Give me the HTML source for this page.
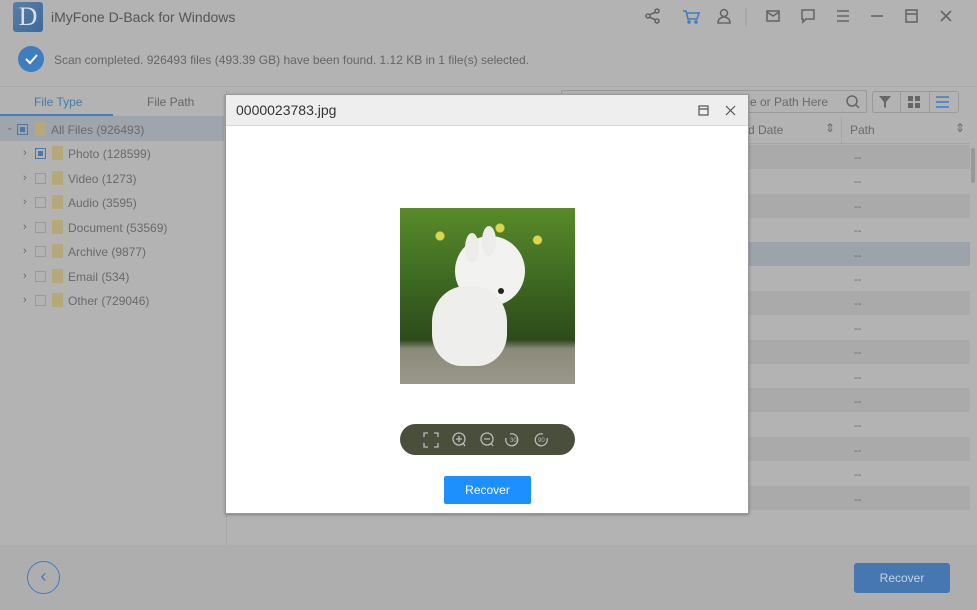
<!DOCTYPE html>
<html><head><meta charset="utf-8"><style>
*{margin:0;padding:0;box-sizing:border-box}
body{width:977px;height:610px;overflow:hidden;background:#b3b3b3;font-family:"Liberation Sans",sans-serif;position:relative;color:#555}
.a{position:absolute}
.t{font-size:12px;color:#6a6a6a}
</style></head><body>
<div class="a" style="left:13px;top:2px;width:30px;height:30px;background:linear-gradient(135deg,#5a7fa8,#3b6a9a);border-radius:3px;color:#d8e0ea;font:26px 'Liberation Serif',serif;text-align:center;line-height:30px">D</div>
<div class="a" style="left:51px;top:9px;font-size:14px;color:#555">iMyFone D-Back for Windows</div>
<svg class="a" style="left:640px;top:6px" width="330" height="22" viewBox="0 0 330 22" fill="none" stroke="#666" stroke-width="1.6">
<circle cx="8" cy="10" r="2"/><circle cx="17" cy="5" r="2"/><circle cx="17" cy="15" r="2"/><path d="M9 9l7-3M9 11l7 3"/>
<path d="M43 5h3l2 8h9l2-6H47" stroke="#3f7cc0"/><circle cx="49" cy="16" r="1" stroke="#3f7cc0"/><circle cx="56" cy="16" r="1" stroke="#3f7cc0"/>
<circle cx="84" cy="7" r="3.5"/><path d="M78 17c0-4 3-6 6-6s6 2 6 6z"/>
<path d="M106 2v18" stroke="#999" stroke-width="1"/>
<rect x="127" y="5" width="12" height="10"/><path d="M127 6l6 4 6-4"/>
<path d="M162 4h12v9h-8l-3 3v-3h-1z"/>
<path d="M197 5h12M197 10h12M197 15h12"/>
<path d="M231 10h12"/>
<rect x="266" y="4" width="11" height="12"/><path d="M266 8h11"/>
<path d="M301 5l10 10M311 5l-10 10"/>
</svg>
<div class="a" style="left:18px;top:46px;width:26px;height:26px;border-radius:50%;background:#3f7cc0"></div>
<svg class="a" style="left:18px;top:46px" width="26" height="26"><path d="M8 13l4 4 7-8" stroke="#fff" stroke-width="2" fill="none"/></svg>
<div class="a" style="left:54px;top:53px;font-size:12px;color:#666">Scan completed. 926493 files (493.39 GB) have been found. 1.12 KB in 1 file(s) selected.</div>
<div class="a" style="left:0;top:86px;width:977px;height:1px;background:#aaa"></div>
<div class="a" style="left:34px;top:95px;font-size:12px;color:#4a78a8">File Type</div>
<div class="a" style="left:147px;top:95px;font-size:12px;color:#666">File Path</div>
<div class="a" style="left:0;top:114px;width:113px;height:2px;background:#3f7cc0"></div>
<div class="a" style="left:0;top:116px;width:224px;height:25px;background:#9ea5ad"></div>
<div class="a" style="left:226px;top:90px;width:1px;height:455px;background:#a8a8a8"></div>
<div class="a t" style="left:0;top:0">
<div class="a" style="left:6px;top:122px;font-size:9px">⌄</div>
<div class="a" style="left:17px;top:124px;width:11px;height:11px;border:1px solid #4a78a8"><div style="margin:2px;width:5px;height:5px;background:#4a78a8"></div></div>
<div class="a" style="left:35px;top:122px;width:11px;height:14px;background:#b5a87a"></div>
<div class="a" style="left:51px;top:123px;white-space:nowrap">All Files (926493)</div>
</div>
<div class="a t" style="left:0;top:147px">
<div class="a" style="left:23px;top:0;font-size:11px">›</div><div class="a" style="left:35px;top:1px;width:11px;height:11px;border:1px solid #4a78a8"><div style="margin:2px;width:5px;height:5px;background:#4a78a8"></div></div><div class="a" style="left:52px;top:-1px;width:11px;height:14px;background:#b5a87a"></div><div class="a" style="left:68px;top:0;white-space:nowrap">Photo (128599)</div></div>
<div class="a t" style="left:0;top:172px"><div class="a" style="left:23px;top:0;font-size:11px">›</div><div class="a" style="left:35px;top:1px;width:11px;height:11px;border:1px solid #999"></div><div class="a" style="left:52px;top:-1px;width:11px;height:14px;background:#b5a87a"></div><div class="a" style="left:68px;top:0;white-space:nowrap">Video (1273)</div></div>
<div class="a t" style="left:0;top:196px"><div class="a" style="left:23px;top:0;font-size:11px">›</div><div class="a" style="left:35px;top:1px;width:11px;height:11px;border:1px solid #999"></div><div class="a" style="left:52px;top:-1px;width:11px;height:14px;background:#b5a87a"></div><div class="a" style="left:68px;top:0;white-space:nowrap">Audio (3595)</div></div>
<div class="a t" style="left:0;top:221px"><div class="a" style="left:23px;top:0;font-size:11px">›</div><div class="a" style="left:35px;top:1px;width:11px;height:11px;border:1px solid #999"></div><div class="a" style="left:52px;top:-1px;width:11px;height:14px;background:#b5a87a"></div><div class="a" style="left:68px;top:0;white-space:nowrap">Document (53569)</div></div>
<div class="a t" style="left:0;top:245px"><div class="a" style="left:23px;top:0;font-size:11px">›</div><div class="a" style="left:35px;top:1px;width:11px;height:11px;border:1px solid #999"></div><div class="a" style="left:52px;top:-1px;width:11px;height:14px;background:#b5a87a"></div><div class="a" style="left:68px;top:0;white-space:nowrap">Archive (9877)</div></div>
<div class="a t" style="left:0;top:270px"><div class="a" style="left:23px;top:0;font-size:11px">›</div><div class="a" style="left:35px;top:1px;width:11px;height:11px;border:1px solid #999"></div><div class="a" style="left:52px;top:-1px;width:11px;height:14px;background:#b5a87a"></div><div class="a" style="left:68px;top:0;white-space:nowrap">Email (534)</div></div>
<div class="a t" style="left:0;top:294px"><div class="a" style="left:23px;top:0;font-size:11px">›</div><div class="a" style="left:35px;top:1px;width:11px;height:11px;border:1px solid #999"></div><div class="a" style="left:52px;top:-1px;width:11px;height:14px;background:#b5a87a"></div><div class="a" style="left:68px;top:0;white-space:nowrap">Other (729046)</div></div>
<div class="a" style="left:561px;top:90px;width:306px;height:23px;border:1px solid #999;border-radius:2px"></div>
<div class="a t" style="left:750px;top:95px">e or Path Here</div>
<svg class="a" style="left:845px;top:94px" width="16" height="16" fill="none" stroke="#666" stroke-width="1.5"><circle cx="7" cy="7" r="5"/><path d="M11 11l3 3"/></svg>
<div class="a" style="left:872px;top:91px;width:87px;height:22px;border:1px solid #999;border-radius:3px"></div>
<div class="a" style="left:900px;top:91px;width:1px;height:22px;background:#999"></div>
<div class="a" style="left:929px;top:91px;width:1px;height:22px;background:#999"></div>
<svg class="a" style="left:878px;top:94px" width="80" height="16"><path d="M1 2h12l-5 6v6l-2-1V8z" fill="#666"/><rect x="30" y="2" width="5" height="5" fill="#666"/><rect x="37" y="2" width="5" height="5" fill="#666"/><rect x="30" y="9" width="5" height="5" fill="#666"/><rect x="37" y="9" width="5" height="5" fill="#666"/><path d="M58 3h13M58 8h13M58 13h13" stroke="#3f7cc0" stroke-width="1.5"/></svg>
<div class="a" style="left:745px;top:116px;width:225px;height:28px;border-bottom:1px solid #a0a6ad"></div>
<div class="a t" style="left:748px;top:123px;font-size:12px">d Date</div>
<div class="a t" style="left:825px;top:121px">⇕</div>
<div class="a" style="left:841px;top:117px;width:1px;height:26px;background:#a5a5a5"></div>
<div class="a t" style="left:850px;top:123px">Path</div>
<div class="a t" style="left:955px;top:121px">⇕</div>
<div class="a" style="left:745px;top:145px;width:225px;height:24px;background:#aaa"></div>
<div class="a" style="left:745px;top:194px;width:225px;height:24px;background:#aaa"></div>
<div class="a" style="left:745px;top:242px;width:225px;height:24px;background:#9ca3aa"></div>
<div class="a" style="left:745px;top:291px;width:225px;height:24px;background:#aaa"></div>
<div class="a" style="left:745px;top:340px;width:225px;height:24px;background:#aaa"></div>
<div class="a" style="left:745px;top:388px;width:225px;height:24px;background:#aaa"></div>
<div class="a" style="left:745px;top:437px;width:225px;height:24px;background:#aaa"></div>
<div class="a" style="left:745px;top:486px;width:225px;height:24px;background:#aaa"></div>
<div class="a" style="left:971px;top:148px;width:4px;height:35px;background:#999;border-radius:2px"></div>
<div class="a t" style="left:854px;top:146px;font-size:11px;line-height:24.4px">--<br>--<br>--<br>--<br>--<br>--<br>--<br>--<br>--<br>--<br>--<br>--<br>--<br>--<br>--</div>
<div class="a" style="left:0;top:545px;width:977px;height:65px;background:#aeaeae"></div>
<div class="a" style="left:27px;top:561px;width:33px;height:33px;border:1.5px solid #3f7cc0;border-radius:50%;color:#3f7cc0;text-align:center;line-height:29px;font-size:18px">‹</div>
<div class="a" style="left:854px;top:563px;width:96px;height:30px;background:#4677b0;border-radius:3px;color:#c8d3e0;font-size:12px;text-align:center;line-height:30px">Recover</div>
<div class="a" style="left:225px;top:94px;width:524px;height:420px;background:#fff;border:1px solid #999;box-shadow:0 1px 3px rgba(0,0,0,.3)">
<div style="height:31px;background:#eee;border-bottom:1px solid #d8d8d8;position:relative">
<div class="a" style="left:10px;top:7px;font-size:14px;color:#333">0000023783.jpg</div>
<svg class="a" style="left:470px;top:9px" width="45" height="14" fill="none" stroke="#555" stroke-width="1.2"><rect x="3" y="2" width="9" height="9"/><path d="M3 5h9M30 2l9 9M39 2l-9 9"/></svg>
</div>
<div class="a" style="left:174px;top:113px;width:175px;height:176px;overflow:hidden;background:linear-gradient(180deg,#5a8a2a 0%,#3f6a22 40%,#2d4a1a 75%,#8a8a7a 80%,#9a978a 100%)">
<div class="a" style="left:10px;top:8px;width:150px;height:40px;background:radial-gradient(circle at 20% 50%,#d8d84a 4px,transparent 5px),radial-gradient(circle at 60% 30%,#d8d84a 4px,transparent 5px),radial-gradient(circle at 85% 60%,#d8d84a 4px,transparent 5px),radial-gradient(circle at 45% 80%,#c8c83a 3px,transparent 4px)"></div>
<div class="a" style="left:55px;top:28px;width:70px;height:70px;border-radius:50%;background:#f2f2f0"></div>
<div class="a" style="left:32px;top:78px;width:75px;height:80px;border-radius:45% 45% 40% 40%;background:#eeeeec"></div>
<div class="a" style="left:65px;top:25px;width:14px;height:30px;border-radius:50%;background:#ececea"></div>
<div class="a" style="left:82px;top:18px;width:14px;height:30px;border-radius:50%;background:#ececea"></div>
<div class="a" style="left:98px;top:80px;width:6px;height:6px;border-radius:50%;background:#222"></div>
</div>
<div class="a" style="left:174px;top:329px;width:175px;height:31px;border-radius:16px;background:#4a4f3c"></div>
<svg class="a" style="left:196px;top:336px" width="140" height="18" fill="none" stroke="#bbb" stroke-width="1.3">
<path d="M2 6V2h4M12 2h4v4M16 12v4h-4M6 16H2v-4"/>
<circle cx="37" cy="8" r="6"/><path d="M34 8h6M37 5v6M41 12l2 3"/>
<circle cx="65" cy="8" r="6"/><path d="M62 8h6M69 12l2 3"/>
<path d="M88 3a6 6 0 1 1-4 4"/><text x="88" y="11" font-size="6" fill="#bbb" stroke="none" font-family="Liberation Sans">30</text>
<path d="M121 3a6 6 0 1 0 4 4"/><text x="116" y="11" font-size="6" fill="#bbb" stroke="none" font-family="Liberation Sans">90</text>
</svg>
<div class="a" style="left:218px;top:381px;width:87px;height:28px;background:#1e8fff;border-radius:2px;color:#fff;font-size:12px;text-align:center;line-height:28px">Recover</div>
</div>
</body></html>
